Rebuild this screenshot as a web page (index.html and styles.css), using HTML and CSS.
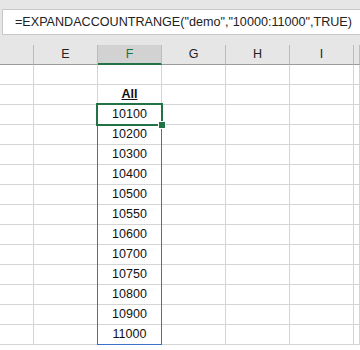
FILE: index.html
```html
<!DOCTYPE html>
<html lang="en">
<head>
  <meta charset="utf-8"/>
  <title>EXPANDACCOUNTRANGE</title>
  <link rel="stylesheet" href="styles.css">
</head>
<body>
  <div class="formula-area">
    <div class="formula-box">=EXPANDACCOUNTRANGE("demo","10000:11000",TRUE)</div>
  </div>

  <div class="sheet">
    <!-- column headers -->
    <div class="col-head"></div>
    <div class="col-head">E</div>
    <div class="col-head active">F</div>
    <div class="col-head">G</div>
    <div class="col-head">H</div>
    <div class="col-head">I</div>
    <div class="col-head"></div>

    <!-- row 1 -->
    <div class="cell"></div><div class="cell"></div><div class="cell"></div><div class="cell"></div><div class="cell"></div><div class="cell"></div><div class="cell"></div>
    <!-- row 2 -->
    <div class="cell"></div><div class="cell"></div><div class="cell title">All</div><div class="cell"></div><div class="cell"></div><div class="cell"></div><div class="cell"></div>
    <!-- rows 3..14 -->
    <div class="cell"></div><div class="cell"></div><div class="cell num">10100</div><div class="cell"></div><div class="cell"></div><div class="cell"></div><div class="cell"></div>
    <div class="cell"></div><div class="cell"></div><div class="cell num">10200</div><div class="cell"></div><div class="cell"></div><div class="cell"></div><div class="cell"></div>
    <div class="cell"></div><div class="cell"></div><div class="cell num">10300</div><div class="cell"></div><div class="cell"></div><div class="cell"></div><div class="cell"></div>
    <div class="cell"></div><div class="cell"></div><div class="cell num">10400</div><div class="cell"></div><div class="cell"></div><div class="cell"></div><div class="cell"></div>
    <div class="cell"></div><div class="cell"></div><div class="cell num">10500</div><div class="cell"></div><div class="cell"></div><div class="cell"></div><div class="cell"></div>
    <div class="cell"></div><div class="cell"></div><div class="cell num">10550</div><div class="cell"></div><div class="cell"></div><div class="cell"></div><div class="cell"></div>
    <div class="cell"></div><div class="cell"></div><div class="cell num">10600</div><div class="cell"></div><div class="cell"></div><div class="cell"></div><div class="cell"></div>
    <div class="cell"></div><div class="cell"></div><div class="cell num">10700</div><div class="cell"></div><div class="cell"></div><div class="cell"></div><div class="cell"></div>
    <div class="cell"></div><div class="cell"></div><div class="cell num">10750</div><div class="cell"></div><div class="cell"></div><div class="cell"></div><div class="cell"></div>
    <div class="cell"></div><div class="cell"></div><div class="cell num">10800</div><div class="cell"></div><div class="cell"></div><div class="cell"></div><div class="cell"></div>
    <div class="cell"></div><div class="cell"></div><div class="cell num">10900</div><div class="cell"></div><div class="cell"></div><div class="cell"></div><div class="cell"></div>
    <div class="cell"></div><div class="cell"></div><div class="cell num">11000</div><div class="cell"></div><div class="cell"></div><div class="cell"></div><div class="cell"></div>

    <!-- spill range + active cell -->
    <div class="spill"></div>
    <div class="selected"><span class="handle"></span></div>
  </div>
</body>
</html>
```

FILE: styles.css
```css
body {
  margin: 0;
  background: #fff;
  font-family: "Liberation Sans", Arial, sans-serif;
  color: #222;
  overflow: hidden;
}

.formula-area {
  background: #e6e6e6;
  padding: 9px 0 10px 2px;
}
.formula-box {
  box-sizing: border-box;
  height: 26px;
  padding-left: 12px;
  background: #fff;
  border: 1px solid #c8c8c8;
  border-right: none;
  font-size: 12.6px;
  line-height: 24px;
  white-space: nowrap;
  overflow: hidden;
}

.sheet {
  position: relative;
  display: grid;
  grid-template-columns: 34px repeat(5, 64px) 1fr;
  grid-auto-rows: 20px;
}

.col-head {
  box-sizing: border-box;
  background: #e6e6e6;
  border-right: 1px solid #bcbcbc;
  border-bottom: 1px solid #9b9b9b;
  font-size: 12.5px;
  line-height: 19px;
  text-align: center;
  color: #222;
}
.col-head.active {
  background: #d2d2d2;
  color: #217346;
  border-bottom: 2px solid #217346;
  line-height: 18px;
}

.cell {
  box-sizing: border-box;
  border-right: 1px solid #d4d4d4;
  border-bottom: 1px solid #d4d4d4;
  font-size: 12.5px;
  line-height: 19px;
  text-align: center;
  color: #111;
}
.cell.title {
  font-weight: bold;
  text-decoration: underline;
}

/* overlays sit on the grid area but take no cell */
.spill {
  position: absolute;
  grid-column: 3 / 4;
  grid-row: 4 / 16;
  inset: -1px 0 0 -1px;
  border: 1px solid #3b6fcb;
  pointer-events: none;
}
.selected {
  position: absolute;
  grid-column: 3 / 4;
  grid-row: 4 / 5;
  inset: -2px -1px -1px -2px;
  border: 2px solid #217346;
  pointer-events: none;
}
.handle {
  position: absolute;
  right: -5px;
  bottom: -5px;
  width: 6px;
  height: 6px;
  background: #217346;
  border: 1px solid #fff;
}
```
